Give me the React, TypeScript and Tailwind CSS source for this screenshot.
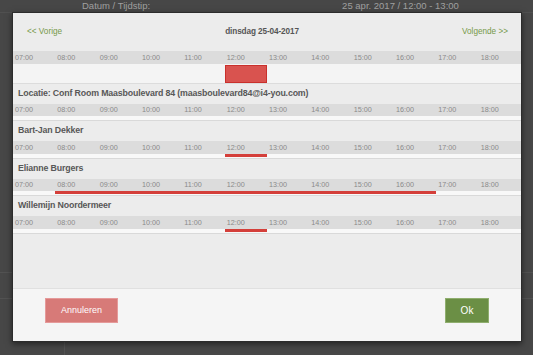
const hours = ["07:00", "08:00", "09:00", "10:00", "11:00", "12:00", "13:00", "14:00", "15:00", "16:00", "17:00", "18:00"]

const rows = [
  { name: "Locatie: Conf Room Maasboulevard 84 (maasboulevard84@i4-you.com)", bar: null },
  { name: "Bart-Jan Dekker", bar: "col-start-6 col-span-1" },
  { name: "Elianne Burgers", bar: "col-start-2 col-span-9" },
  { name: "Willemijn Noordermeer", bar: "col-start-6 col-span-1" },
]

function Axis() {
  return (
    <div className="grid grid-cols-12 h-[12.5px] bg-[#dcdcdc] text-[7.2px] leading-none text-[#8a8a8a]">
      {hours.map((h) => (
        <div key={h} className="flex items-center pl-[2px]">
          {h}
        </div>
      ))}
    </div>
  )
}

export default function App() {
  return (
    <div className="relative w-[533px] h-[355px] overflow-hidden bg-[#474747] font-['Liberation_Sans',Arial,sans-serif]">
      {/* dimmed page behind the dialog */}
      <div className="flex h-[13px] items-center border-b border-[#505050] text-[9.5px] text-[#a0a0a0]">
        <span className="ml-[82px]">Datum / Tijdstip:</span>
        <span className="ml-[192px]">25 apr. 2017 / 12:00 - 13:00</span>
      </div>
      <div className="absolute left-0 right-0 top-[272px] h-[27px] border-y border-[#525252]" />
      <div className="absolute left-[64px] top-[299px] bottom-0 border-l border-[#525252]" />

      {/* dialog */}
      <div className="absolute left-[12px] top-[12px] flex h-[330px] w-[510px] flex-col border border-[#2c2c2c] bg-[#ececec] shadow-[0_2px_6px_rgba(0,0,0,0.5)]">
        <div className="flex h-[38px] items-center justify-between pl-[14px] pr-[13px] text-[8.2px]">
          <span className="text-[#76994a]">&lt;&lt; Vorige</span>
          <span className="font-bold text-[#555] tracking-[-0.1px]">dinsdag 25-04-2017</span>
          <span className="text-[#76994a]">Volgende &gt;&gt;</span>
        </div>

        <Axis />
        <div className="grid grid-cols-12 h-[19px] bg-[#f4f4f4] pt-[1px]">
          <div className="col-start-6 col-span-1 border border-[#c9302c] bg-[#d9534f]" />
        </div>
        <div className="h-[1px] bg-[#dcdcdc]" />

        {rows.map((r) => (
          <div key={r.name}>
            <div className="flex h-[20px] items-center pl-[5px] text-[8.8px] font-bold tracking-[-0.15px] text-[#585858]">{r.name}</div>
            <Axis />
            <div className="grid grid-cols-12 h-[4px] bg-[#f8f8f8]">
              {r.bar && <div className={`${r.bar} h-[3px] bg-[#d43f3a]`} />}
            </div>
            <div className="h-[1px] bg-[#d9d9d9]" />
          </div>
        ))}

        <div className="flex-1" />

        <div className="flex h-[53px] items-start justify-between border-t border-[#e0e0e0] bg-[#f5f5f5] px-[32px] pt-[9px]">
          <button className="h-[25px] w-[73px] border border-[#e59a9a] bg-[#d77a78] text-[9px] text-white">Annuleren</button>
          <button className="h-[25px] w-[44px] border border-[#8fae6e] bg-[#6b8f45] text-[10px] text-white">Ok</button>
        </div>
      </div>
    </div>
  )
}
